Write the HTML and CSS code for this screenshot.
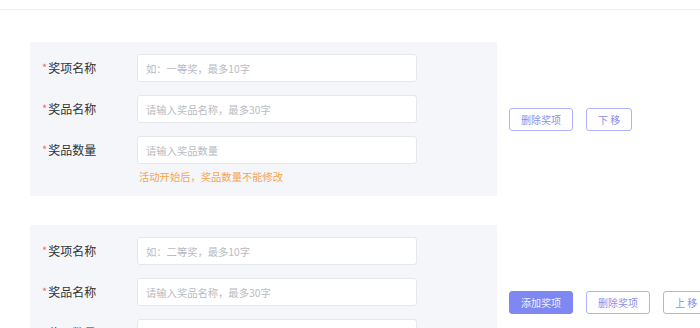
FILE: index.html
```html
<!DOCTYPE html>
<html lang="zh-CN">
<head>
<meta charset="utf-8">
<title>奖项设置</title>
<link rel="stylesheet" href="styles.css">
</head>
<body>
<div class="topbar"></div>
<div class="content">
  <div class="prize">
    <div class="panel">
      <div class="row">
        <label class="label"><span class="req">*</span>奖项名称</label>
        <input class="input" type="text" placeholder="如：一等奖，最多10字">
      </div>
      <div class="row">
        <label class="label"><span class="req">*</span>奖品名称</label>
        <input class="input" type="text" placeholder="请输入奖品名称，最多30字">
      </div>
      <div class="row">
        <label class="label"><span class="req">*</span>奖品数量</label>
        <input class="input" type="text" placeholder="请输入奖品数量">
      </div>
      <div class="hint">活动开始后，奖品数量不能修改</div>
    </div>
    <div class="actions">
      <button class="btn">删除奖项</button>
      <button class="btn">下 移</button>
    </div>
  </div>
  <div class="prize">
    <div class="panel">
      <div class="row">
        <label class="label"><span class="req">*</span>奖项名称</label>
        <input class="input" type="text" placeholder="如：二等奖，最多10字">
      </div>
      <div class="row">
        <label class="label"><span class="req">*</span>奖品名称</label>
        <input class="input" type="text" placeholder="请输入奖品名称，最多30字">
      </div>
      <div class="row">
        <label class="label"><span class="req">*</span>奖品数量</label>
        <input class="input" type="text" placeholder="请输入奖品数量">
      </div>
      <div class="hint">活动开始后，奖品数量不能修改</div>
    </div>
    <div class="actions">
      <button class="btn btn-primary">添加奖项</button>
      <button class="btn">删除奖项</button>
      <button class="btn">上 移</button>
    </div>
  </div>
</div>
</body>
</html>
```
FILE: styles.css
```css
html, body {
  margin: 0;
  padding: 0;
  background: #ffffff;
  width: 700px;
  height: 328px;
  overflow: hidden;
  font-family: "Noto Sans CJK SC", "Noto Sans", sans-serif;
}

.topbar {
  height: 9px;
  border-bottom: 1px solid #ededf0;
}

.content {
  padding: 32px 0 0 30px;
  display: flex;
  flex-direction: column;
  gap: 29px;
}

.prize {
  display: flex;
  align-items: center;
}

.panel {
  width: 467px;
  flex: none;
  box-sizing: border-box;
  background: #f5f6fa;
  padding: 12px 0 11px 12px;
  display: flex;
  flex-direction: column;
  gap: 13px;
}

.row {
  display: flex;
  align-items: center;
  height: 28px;
}

.label {
  width: 95px;
  flex: none;
  font-size: 12px;
  color: #333333;
  line-height: 16px;
}

.req {
  color: #f56c6c;
  font-size: 11px;
  margin-right: 1px;
  position: relative;
  top: -1px;
}

.input {
  width: 280px;
  height: 28px;
  box-sizing: border-box;
  border: 1px solid #e6e7eb;
  border-radius: 3px;
  background: #ffffff;
  padding: 0 8px;
  font-family: "Noto Sans CJK SC", "Noto Sans", sans-serif;
  font-size: 10.3px;
  color: #333;
  outline: none;
}

.input::placeholder {
  color: #b9bbc1;
}

.hint {
  margin: -8px 0 0 97px;
  font-size: 10.3px;
  line-height: 16px;
  color: #f7a54a;
}

.actions {
  display: flex;
  gap: 13px;
  margin-left: 12px;
  flex: none;
}

.btn {
  height: 23px;
  padding: 0 11px;
  border: 1px solid #adb3fa;
  border-radius: 3px;
  background: #ffffff;
  color: #8990ec;
  font-family: "Noto Sans CJK SC", "Noto Sans", sans-serif;
  font-size: 10px;
  line-height: 21px;
  white-space: nowrap;
  cursor: pointer;
}

.btn-primary {
  background: #7f88f2;
  border-color: #7f88f2;
  color: #eef0ff;
}
```
